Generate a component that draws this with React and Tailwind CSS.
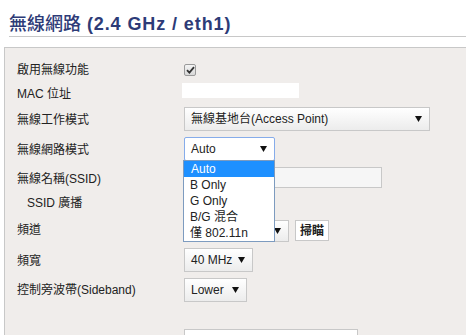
import React from "react";

const Arrow = () => (
  <svg width="7" height="6" viewBox="0 0 7 6" className="absolute right-[7px] top-1/2 -translate-y-1/2">
    <path d="M0 0H7L3.5 6Z" fill="#111" />
  </svg>
);

function Sel({ w, h = "h-[24px]", focus = false, children }) {
  return (
    <div
      className={`relative ${w} ${h} flex items-center pl-[6px] text-[12px] text-[#222] bg-linear-to-b from-white to-[#ececec] ${
        focus ? "border border-[#86acea] rounded-[2px] from-white to-white" : "border border-[#c8c8c8]"
      }`}
    >
      <span className="leading-none">{children}</span>
      <Arrow />
    </div>
  );
}

function Row({ h, lmt, cmt, label, indent = false, children }) {
  return (
    <div className={`flex items-start ${h}`}>
      <div className={`w-[167px] shrink-0 leading-[16px] text-[12px] text-[#222] ${lmt} ${indent ? "pl-[10px]" : ""}`}>
        {label}
      </div>
      <div className={`flex items-start ${cmt}`}>{children}</div>
    </div>
  );
}

export default function App() {
  return (
    <div className="w-[466px] h-[335px] overflow-hidden bg-white font-['Liberation_Sans','Noto_Sans_CJK_TC',sans-serif]">
      <div className="ml-[9px] h-[37px] border-b border-[#c8c8c8] pt-[11px]">
        <div className="leading-[22px] text-[#2d3b77] whitespace-nowrap">
          <span className="text-[18px] font-medium font-['Noto_Sans_CJK_TC',sans-serif]">無線網路</span>
          <span className="text-[18px] font-bold tracking-[0.9px]"> (2.4 GHz / eth1)</span>
        </div>
      </div>

      <div className="ml-[4px] mt-[10px] w-[480px] h-[300px] border border-[#c8c8c8] bg-[#f0edeb] pl-[12px] pt-[10px]">
        <Row h="h-[24px]" lmt="mt-[4px]" cmt="mt-[6px]" label="啟用無線功能">
          <div className="w-[12px] h-[12px] rounded-[2px] border border-[#9a9a9a] bg-linear-to-b from-[#f4f4f4] to-[#d8d8d8] flex items-center justify-center">
            <svg width="9" height="8" viewBox="0 0 9 8">
              <path d="M1 4.2L3.4 6.6L8 1.2" stroke="#333" strokeWidth="1.8" fill="none" />
            </svg>
          </div>
        </Row>

        <Row h="h-[24px]" lmt="mt-[4px]" cmt="mt-[1px]" label="MAC 位址">
          <div className="-ml-[2px] w-[117px] h-[15px] bg-white" />
        </Row>

        <Row h="h-[28px]" lmt="mt-[6px]" cmt="mt-[1px]" label="無線工作模式">
          <Sel w="w-[246px]">無線基地台(Access Point)</Sel>
        </Row>

        <Row h="h-[30px]" lmt="mt-[8px]" cmt="mt-[3px]" label="無線網路模式">
          <div className="relative">
            <Sel w="w-[91px]" focus>
              Auto
            </Sel>
            <div className="absolute left-[-1px] top-[23px] z-10 w-[92px] border border-[#7d9bbf] bg-white text-[12px] text-[#222] leading-[16px]">
              <div className="h-[16px] pl-[7px] bg-[#1e90ff] text-white">Auto</div>
              <div className="h-[16px] pl-[6px]">B Only</div>
              <div className="h-[16px] pl-[6px]">G Only</div>
              <div className="h-[16px] pl-[6px]">B/G 混合</div>
              <div className="h-[16px] pl-[6px]">僅 802.11n</div>
            </div>
          </div>
        </Row>

        <Row h="h-[30px]" lmt="mt-[7px]" cmt="mt-[3px]" label="無線名稱(SSID)">
          <div className="w-[198px] h-[21px] border border-[#c8c8c8] bg-[#f6f6f6]" />
        </Row>

        <Row h="h-[20px]" lmt="mt-[1px]" cmt="mt-0" label="SSID 廣播" indent>
          <div />
        </Row>

        <Row h="h-[32px]" lmt="mt-[8px]" cmt="mt-[6px]" label="頻道">
          <Sel w="w-[105px]" h="h-[22px]"></Sel>
          <div className="ml-[6px] h-[21px] px-[4px] border border-[#c8c8c8] bg-white flex items-center text-[12px] font-bold text-[#222] leading-none">
            掃瞄
          </div>
        </Row>

        <Row h="h-[30px]" lmt="mt-[7px]" cmt="mt-[2px]" label="頻寬">
          <Sel w="w-[69px]">40 MHz</Sel>
        </Row>

        <Row h="h-[30px]" lmt="mt-[6px]" cmt="mt-[2px]" label="控制旁波帶(Sideband)">
          <Sel w="w-[63px]">Lower</Sel>
        </Row>

        <Row h="h-[23px]" lmt="mt-0" cmt="mt-0" label="">
          <div />
        </Row>

        <Row h="h-[30px]" lmt="mt-0" cmt="mt-0" label="">
          <div className="w-[174px] h-[24px] border border-[#c8c8c8] bg-white" />
        </Row>
      </div>
    </div>
  );
}
